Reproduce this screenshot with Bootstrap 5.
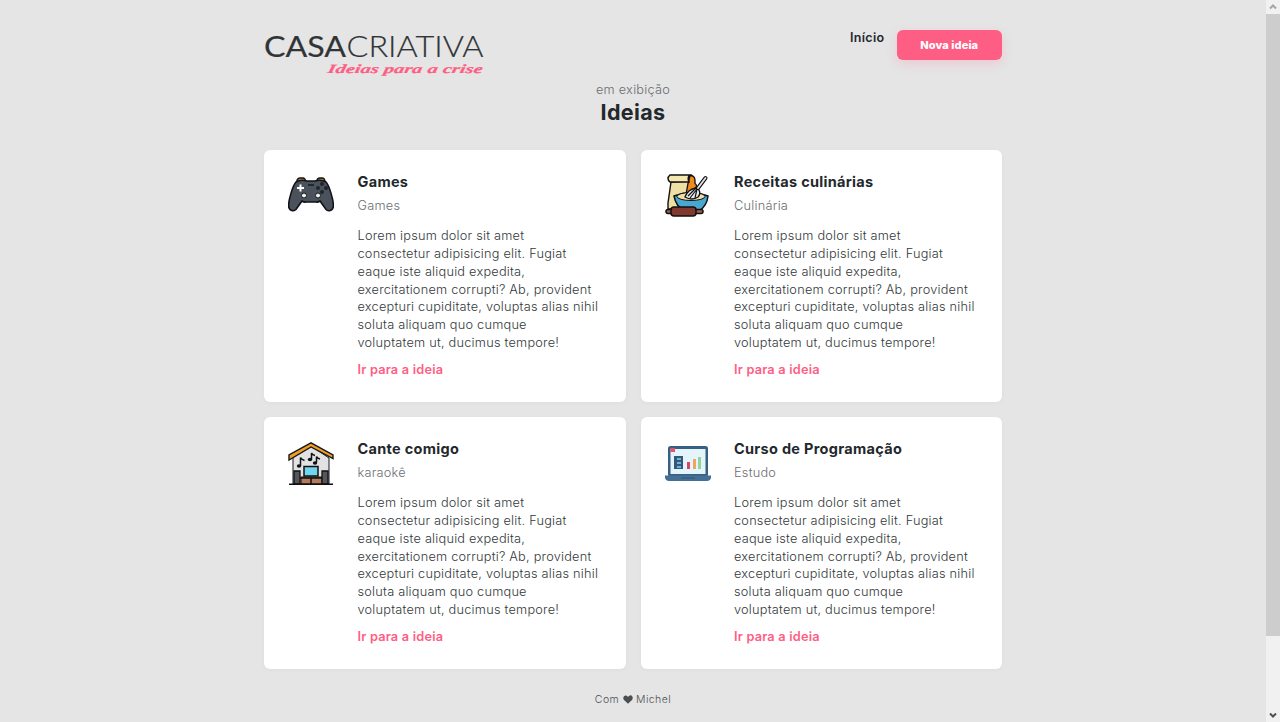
<!DOCTYPE html>
<html lang="pt-br">
<head>
<meta charset="utf-8">
<meta name="viewport" content="width=device-width, initial-scale=1">
<title>Casa Criativa</title>
<link href="https://cdn.jsdelivr.net/npm/bootstrap@5.3.0/dist/css/bootstrap.min.css" rel="stylesheet">
<style>
body{background:#e5e5e5;color:#23282c;font-family:Inter,"Open Sans",sans-serif;font-size:12.75px;height:722px;overflow:hidden}
.page{width:738px;margin-left:264px}
.top-bar{height:81.500px;padding-top:30px}
.logo{margin-top:-1px}
.home-link{font-weight:600;font-size:12.5px;line-height:15px;letter-spacing:.33px;color:#23282c}
.btn-idea{width:105.5px;height:30px;background:#ff5e84;color:#fff;font-weight:800;font-size:11px;line-height:30px;padding:0;border:0;border-radius:6px;box-shadow:0 4px 12px rgba(255,94,132,.2);letter-spacing:.1px}
.kicker{font-weight:300;line-height:16px;color:#6a6d70;letter-spacing:.25px}
.heading{font-size:21.5px;font-weight:700;line-height:29px;letter-spacing:.35px}
.ideas{display:grid;grid-template-columns:361.5px 361.5px;gap:15px;margin-top:23px}
.idea{height:252px;border:0;border-radius:6px;padding:24.5px 24px;box-shadow:0 1px 5px rgba(0,0,0,.035)}
.idea svg{width:46px;height:46px;flex:none}
.idea-body{margin-left:23.5px}
.idea h2{font-size:14.5px;font-weight:700;line-height:18px;margin:-1.5px 0 6.5px;letter-spacing:.3px}
.kind{font-weight:300;line-height:17px;color:#6b6e70;letter-spacing:.24px;margin-bottom:13px}
.desc{font-weight:300;line-height:17.85px;color:#33383b;letter-spacing:.225px;white-space:nowrap;margin-bottom:9.5px}
.go{font-weight:600;line-height:18px;color:#ff5e84;letter-spacing:.2px}
.foot{font-size:10.5px;font-weight:300;line-height:16px;margin-top:23px;color:#4d5053;letter-spacing:.45px}
.rail{width:14px;background:#f1f1f1;z-index:5}
.thumb{height:622px;background:#cdcdcd}
</style>
</head>
<body>
<svg class="d-none">
<symbol id="games" viewBox="0 0 46 46"><path d="M9 9V6q1-2 3-2h3q2 0 2.500 3M29 7q0-3 3-3h2q3 0 3 4" fill="#ad8b3c" stroke="#101318" stroke-width="1.400"/><path d="M8 8q5-3 11-1h8q6-2 11 1c3 3 8 19 7.300 25-1 4.500-6.300 5-8.300 1l-5-7q-2 1.500-4 1H18q-2 .5-4-1l-5 7c-2 4-7.300 3.500-8.300-1C0 27 5 11 8 8Z" fill="#4b525c" stroke="#101318" stroke-width="1.600"/><path d="M12.500 10.500v7M9 14h7" stroke="#fff" stroke-width="2"/><g fill="#20252c"><circle cx="34" cy="10" r="2"/><circle cx="34" cy="18" r="2"/><circle cx="30" cy="14" r="2"/><circle cx="38" cy="14" r="2"/></g><path d="M20 11h6" stroke="#15191e" stroke-width="1.500"/><g fill="#eef0f2" stroke="#15191e"><circle cx="16" cy="21.500" r="2.500"/><circle cx="30" cy="21.500" r="2.500"/></g></symbol>
<symbol id="cook" viewBox="0 0 46 46"><path d="M6 8 3 29V35H20L25 7Z" fill="#eee0a4" stroke="#111" stroke-width="1.400"/><path d="M25 1.500q5 0 5 5v3q3 2 0 5v6h-9l2-11Z" fill="#f28b1b" stroke="#111" stroke-width="1.300"/><path d="M5 1h20q-3 2-1 7H5Q1 4.500 5 1Z" fill="#f5e7ad" stroke="#111" stroke-width="1.500"/><path d="M9 22q17-7 34 0-1 10-9 15H20Q11 33 9 22Z" fill="#48a8d0" stroke="#111" stroke-width="1.500"/><ellipse cx="26" cy="22.500" rx="14" ry="4" fill="#f0dfaa" stroke="#111"/><path d="M31 14q-8 1-11 9 7 4 13 0 3-3 1-7Z" fill="#e7eaed" stroke="#111" stroke-width="1.400"/><path d="m32 15-7 9M32 15l-2 9M31 14l-8 8" fill="none" stroke="#111" stroke-width="1.200"/><path d="m33 14 7.500-10" stroke="#111" stroke-width="4" stroke-linecap="round"/><path d="m33 14 7.500-10" stroke="#e1e5e8" stroke-width="1.800" stroke-linecap="round"/><path d="M3 37.500h33" stroke="#111" stroke-width="5.500" stroke-linecap="round"/><path d="M3 37.500h33" stroke="#a35c43" stroke-width="2.500" stroke-linecap="round"/><rect x="6" y="33" width="25" height="9" rx="3" fill="#81392f" stroke="#111" stroke-width="1.500"/></symbol>
<symbol id="sing" viewBox="0 0 46 46"><path d="M5 16 23 5l18 12v26H5Z" fill="#e2e2e5" stroke="#17191b"/><path d="M1 17v-3L23 1.800l22 12.200v3.500L23 6 1 19Z" fill="#f39c26" stroke="#16191c" stroke-width="1.400"/><path d="M12.500 25v-8.500q1 2 4 3M23.500 18v-6q1 2 3.500 2.500M28.500 21.500v-6q1 2 3.500 2.500" fill="none" stroke="#111" stroke-width="1.500"/><g fill="#111"><ellipse cx="11" cy="25" rx="2.200" ry="1.800"/><ellipse cx="22" cy="18.500" rx="2.200" ry="1.800"/><ellipse cx="27" cy="22" rx="2.200" ry="1.800"/></g><path d="M13 36h21v7H13Z" fill="#b17b5c" stroke="#111"/><path d="M12 37h23M23 37v6" stroke="#111" stroke-width="1.500"/><rect x="16" y="25.500" width="14" height="9.500" fill="#71d6ed" stroke="#111" stroke-width="1.500"/><path d="M6 30h6v13H6ZM34 30h6v13h-6Z" fill="#55565b" stroke="#111" stroke-width="1.300"/><path d="M1 43.300h44" stroke="#111" stroke-width="1.600"/></symbol>
<symbol id="code" viewBox="0 0 46 46"><rect x="3" y="5" width="40" height="31" rx="2.500" fill="#386083"/><rect x="5.500" y="8" width="35" height="25" fill="#e3f4fb"/><path d="M5.500 7h4.500v4H5.500Z" fill="#df566c"/><path d="M9 15h9v13H9Z" fill="#31597d"/><path d="M12 18h4M12 22h4M12 26h4" stroke="#8fcde0" stroke-width="1.500"/><path d="M22 21h3v7h-3Z" fill="#cf4963"/><path d="M28 18h3v10h-3Z" fill="#f4a45d"/><path d="M33 16h3v12h-3Z" fill="#93d49b"/><path d="M0 34.500h46v2.500q-1 3-4 3H4q-3 0-4-3Z" fill="#456f94"/><path d="M16 37h14" stroke="#2e5678"/></symbol>
</svg>
<div class="page">
<header class="top-bar d-flex justify-content-between align-items-start">
<svg class="logo" width="222" height="50" viewBox="0 0 222 50" role="img"><g font-family="Lato, sans-serif" font-size="29.500" fill="#303436"><text x="0" y="28" font-weight="400" stroke="#303436" stroke-width=".2" textLength="82" lengthAdjust="spacingAndGlyphs">CASA</text><text x="82.500" y="28" font-weight="300" stroke="#303436" stroke-width=".2" textLength="137" lengthAdjust="spacingAndGlyphs">CRIATIVA</text></g><text transform="translate(63 44) skewX(-12)" font-family="Liberation Serif, serif" font-size="12.500" font-weight="700" font-style="italic" fill="#ff5e84" stroke="#ff5e84" stroke-width=".2" textLength="155" lengthAdjust="spacingAndGlyphs">Ideias para a crise</text></svg>
<nav class="d-flex align-items-start"><a class="home-link text-decoration-none me-2 pe-1" href="#">Início</a><a class="btn btn-idea" href="#">Nova ideia</a></nav>
</header>
<main>
<div class="text-center"><div class="kicker">em exibição</div><h1 class="heading mb-0">Ideias</h1></div>
<section class="ideas">
<article class="card idea flex-row"><svg><use href="#games"/></svg><div class="idea-body"><h2>Games</h2><div class="kind">Games</div><p class="desc">Lorem ipsum dolor sit amet<br>consectetur adipisicing elit. Fugiat<br>eaque iste aliquid expedita,<br>exercitationem corrupti? Ab, provident<br>excepturi cupiditate, voluptas alias nihil<br>soluta aliquam quo cumque<br>voluptatem ut, ducimus tempore!</p><a class="go d-block text-decoration-none" href="#">Ir para a ideia</a></div></article>
<article class="card idea flex-row"><svg><use href="#cook"/></svg><div class="idea-body"><h2>Receitas culinárias</h2><div class="kind">Culinária</div><p class="desc">Lorem ipsum dolor sit amet<br>consectetur adipisicing elit. Fugiat<br>eaque iste aliquid expedita,<br>exercitationem corrupti? Ab, provident<br>excepturi cupiditate, voluptas alias nihil<br>soluta aliquam quo cumque<br>voluptatem ut, ducimus tempore!</p><a class="go d-block text-decoration-none" href="#">Ir para a ideia</a></div></article>
<article class="card idea flex-row"><svg><use href="#sing"/></svg><div class="idea-body"><h2>Cante comigo</h2><div class="kind">karaokê</div><p class="desc">Lorem ipsum dolor sit amet<br>consectetur adipisicing elit. Fugiat<br>eaque iste aliquid expedita,<br>exercitationem corrupti? Ab, provident<br>excepturi cupiditate, voluptas alias nihil<br>soluta aliquam quo cumque<br>voluptatem ut, ducimus tempore!</p><a class="go d-block text-decoration-none" href="#">Ir para a ideia</a></div></article>
<article class="card idea flex-row"><svg><use href="#code"/></svg><div class="idea-body"><h2>Curso de Programação</h2><div class="kind">Estudo</div><p class="desc">Lorem ipsum dolor sit amet<br>consectetur adipisicing elit. Fugiat<br>eaque iste aliquid expedita,<br>exercitationem corrupti? Ab, provident<br>excepturi cupiditate, voluptas alias nihil<br>soluta aliquam quo cumque<br>voluptatem ut, ducimus tempore!</p><a class="go d-block text-decoration-none" href="#">Ir para a ideia</a></div></article>
</section>
</main>
<footer class="foot text-center">Com <svg width="10" height="9" viewBox="0 0 10 9"><path d="M5 8.700 1 4.900C-.8 2.800 1 .2 3 .4Q4.300.6 5 1.900 5.700.6 7 .4C9-.2 10.800 2.800 9 4.900Z" fill="#4b4e50"/></svg> Michel</footer>
</div>
<aside class="rail position-fixed top-0 end-0 vh-100 d-flex flex-column justify-content-between" aria-hidden="true"><div><svg class="d-block" width="14" height="14"><path d="m4 8.500 3-3 3 3" fill="none" stroke="#a5a5a5" stroke-width="2"/></svg><div class="thumb"></div></div><svg class="d-block" width="14" height="14"><path d="m4 5.500 3 3 3-3" fill="none" stroke="#505050" stroke-width="2"/></svg></aside>
<script src="https://cdn.jsdelivr.net/npm/bootstrap@5.3.0/dist/js/bootstrap.bundle.min.js"></script>
</body>
</html>
